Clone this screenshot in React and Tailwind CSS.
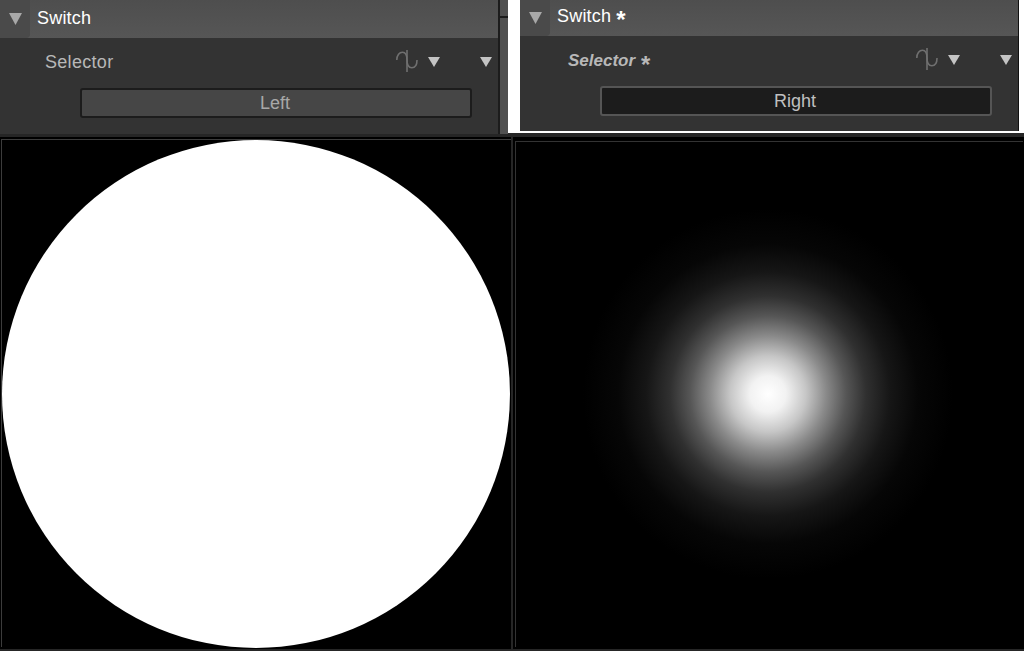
import React from "react";

const font = { fontFamily: '"Liberation Sans", Arial, sans-serif' };

function Arrow({ className }) {
  return (
    <svg width="12" height="10" viewBox="0 0 12 10" className={className}>
      <path d="M0 0H12L6 10Z" fill="#c4c4c4" />
    </svg>
  );
}

function WaveIcon() {
  return (
    <svg width="24" height="24" viewBox="0 0 24 24" fill="none" stroke="#707070" strokeWidth="1.6">
      <path d="M11 0V22" />
      <path d="M0.8 10C0.8 5 3.5 2.2 6.5 2.2C9.5 2.2 11 5.5 11 10C11 14.5 12.8 17.8 15.8 17.8C18.8 17.8 21 15 21 10" />
    </svg>
  );
}

// the star in the title is bigger and lower than the font's own asterisk
function Star() {
  return <span className="font-bold text-[24px] leading-none translate-y-[4px]">*</span>;
}

function Panel({ title, label, value, changed }) {
  return (
    <div className="w-[498px] bg-[#333333] text-[18px]">
      <div className={`flex bg-gradient-to-b from-[#4e4e4e] to-[#565656] ${changed ? "h-[36px]" : "h-[38px]"}`}>
        <div className="w-[30px] flex items-center justify-center bg-[#4a4a4a] rounded-br-sm">
          <svg width="13" height="12" viewBox="0 0 13 12">
            <path d="M0 0H13L6.5 12Z" fill="#a8a8a8" />
          </svg>
        </div>
        <div className={`pl-[7px] flex items-center gap-[5px] text-white tracking-[0.2px] ${changed ? "pb-[4px]" : "pb-[2px]"}`}>
          {title}
          {changed && <Star />}
        </div>
      </div>
      <div className={`flex flex-col pt-[10px] ${changed ? "h-[95px]" : "h-[96px]"}`}>
        <div className="flex items-center h-[28px]">
          <span
            className={
              changed
                ? "pl-[48px] pt-[2px] flex items-center gap-[5px] text-[#b8b8b8] italic font-bold text-[17px]"
                : "pl-[45px] text-[#b8b8b8] tracking-[0.3px]"
            }
          >
            {label}
            {changed && <Star />}
          </span>
          <div className="ml-auto flex items-center pr-[6px]">
            <WaveIcon />
            <Arrow className="ml-[8px]" />
            <Arrow className="ml-[40px]" />
          </div>
        </div>
        <div
          className={`ml-[80px] mt-[12px] w-[392px] h-[30px] pr-[2px] rounded-[3px] border-2 flex items-center justify-center ${
            changed
              ? "bg-[#1c1c1c] border-[#555555] text-[#c0c0c0]"
              : "bg-[#464646] border-[#1c1c1c] text-[#a8a8a8]"
          }`}
        >
          {value}
        </div>
      </div>
    </div>
  );
}

export default function App() {
  return (
    <div className="w-[1024px] h-[651px] overflow-hidden bg-[#262626]" style={font}>
      {/* top row, the two node panels */}
      <div className="flex h-[134px]">
        <div className="flex w-[508px]">
          <Panel title="Switch" label="Selector" value="Left" />
          <div className="w-[10px] border-l-2 border-[#1c1c1c] bg-[#505050]">
            <div className="h-[18px] border-b-2 border-[#1c1c1c]" />
          </div>
        </div>
        <div className="flex w-[516px] h-[133px] bg-white pl-[12px]">
          <div className="h-[131px] border-r border-[#111111]">
            <Panel title="Switch" label="Selector" value="Right" changed />
          </div>
        </div>
      </div>

      {/* bottom row, the two previews */}
      <div className="flex gap-[2px] pt-[3px]">
        <div className="w-[511px] h-[512px] bg-black pt-[2px] pl-[1px]">
          <div className="w-[510px] h-[508px] border-l border-t border-[#3c3c3c] flex items-center">
            <div className="w-[508px] h-[508px] shrink-0 rounded-full bg-white" />
          </div>
        </div>
        <div className="w-[511px] h-[512px] bg-black pt-[4px] pl-[2px]">
          <div className="w-[508px] h-[506px] border-l border-t border-[#333333] bg-[radial-gradient(circle_at_252px_252px,#ffffff_0px,#f2f2f2_18px,#c6c6c6_38px,#8a8a8a_58px,#565656_78px,#303030_98px,#161616_122px,#060606_150px,#000000_185px)]" />
        </div>
      </div>
    </div>
  );
}
